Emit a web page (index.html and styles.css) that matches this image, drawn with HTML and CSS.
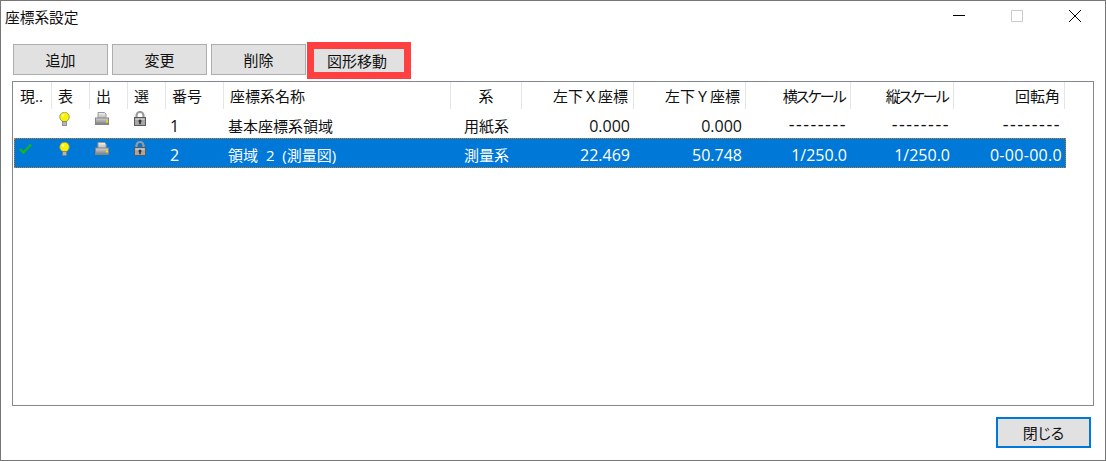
FILE: index.html
```html
<!DOCTYPE html>
<html lang="ja">
<head>
<meta charset="utf-8">
<title>座標系設定</title>
<link rel="stylesheet" href="styles.css">
</head>
<body>
<svg class="defs" width="0" height="0" aria-hidden="true">
  <defs>
    <linearGradient id="gBody" x1="0" y1="0" x2="0" y2="1">
      <stop offset="0" stop-color="#d4d4d4"/>
      <stop offset="1" stop-color="#7c7c7c"/>
    </linearGradient>
    <linearGradient id="gTop" x1="0" y1="0" x2="0" y2="1">
      <stop offset="0" stop-color="#f0f0f0"/>
      <stop offset="1" stop-color="#b4b4b4"/>
    </linearGradient>
    <symbol id="bulb" viewBox="0 0 11 14">
      <circle cx="5.500" cy="5" r="4.800" fill="#f6f200" stroke="#8f8f5a" stroke-width=".8"/>
      <circle cx="4" cy="3.500" r="1.300" fill="#fdfd9a"/>
      <rect x="3.500" y="9.500" width="4" height="4.200" fill="#b5b5b5" stroke="#777" stroke-width=".7"/>
    </symbol>
    <symbol id="printer" viewBox="0 0 14 13">
      <path d="M3 .5h6.500l1.500 1.500v4.500h-8z" fill="url(#gTop)" stroke="#9a9a9a"/>
      <rect x=".5" y="6" width="13" height="6.500" fill="url(#gBody)" stroke="#858585"/>
      <rect x="11" y="8.500" width="2" height="2" fill="#f0e400"/>
    </symbol>
    <symbol id="lock" viewBox="0 0 12 15">
      <path d="M2.500 8V4.500a3.500 3.500 0 0 1 7 0V8" fill="none" stroke="#9a9a9a" stroke-width="2.200"/>
      <rect x=".5" y="6.500" width="11" height="8" fill="#a6a6a6" stroke="#5a5a5a"/>
      <rect x="1.500" y="7.500" width="9" height="1.500" fill="#c8c8c8"/>
      <circle cx="6" cy="10" r="1.500" fill="#333"/>
      <rect x="5.200" y="10" width="1.600" height="3.200" fill="#333"/>
    </symbol>
  </defs>
</svg>
<main class="window">
  <header class="titlebar">
    <h1 class="title">座標系設定</h1>
    <div class="winctrls">
      <svg class="winicon" width="12" height="12" viewBox="0 0 12 12"><path d="M0 5.500H12" stroke="#000"/></svg>
      <svg class="winicon" width="12" height="12" viewBox="0 0 12 12"><rect x=".5" y=".5" width="11" height="11" fill="none" stroke="#ccc"/></svg>
      <svg class="winicon" width="12" height="12" viewBox="0 0 12 12"><path d="M0 0L12 12M12 0L0 12" stroke="#000"/></svg>
    </div>
  </header>
  <div class="toolbar">
    <button class="btn">追加</button>
    <button class="btn">変更</button>
    <button class="btn">削除</button>
    <button class="btn btn-marked">図形移動</button>
  </div>
  <section class="list">
    <div class="row head">
      <div class="c c1 sep">現..</div>
      <div class="c c2 sep">表</div>
      <div class="c c3 sep">出</div>
      <div class="c c4 sep">選</div>
      <div class="c c5 sep">番号</div>
      <div class="c c6 sep">座標系名称</div>
      <div class="c c7 sep center">系</div>
      <div class="c c8 sep right">左下Ｘ座標</div>
      <div class="c c9 sep right">左下Ｙ座標</div>
      <div class="c c10 sep right kana">横スケール</div>
      <div class="c c11 sep right kana">縦スケール</div>
      <div class="c c12 sep right">回転角</div>
    </div>
    <div class="row item">
      <div class="c c1"></div>
      <div class="c c2 ic"><svg class="i-bulb"><use href="#bulb"/></svg></div>
      <div class="c c3 ic"><svg class="i-printer"><use href="#printer"/></svg></div>
      <div class="c c4 ic"><svg class="i-lock"><use href="#lock"/></svg></div>
      <div class="c c5 num">1</div>
      <div class="c c6">基本座標系領域</div>
      <div class="c c7 center">用紙系</div>
      <div class="c c8 right num">0.000</div>
      <div class="c c9 right num">0.000</div>
      <div class="c c10 right dash">--------</div>
      <div class="c c11 right dash">--------</div>
      <div class="c c12 right dash">--------</div>
    </div>
    <div class="row item selected">
      <div class="c c1 ic"><svg class="i-check" viewBox="0 0 13 11"><path d="M1 6L4.500 9.500L12 1.500" fill="none" stroke="#17b51c" stroke-width="2.400"/></svg></div>
      <div class="c c2 ic"><svg class="i-bulb"><use href="#bulb"/></svg></div>
      <div class="c c3 ic"><svg class="i-printer"><use href="#printer"/></svg></div>
      <div class="c c4 ic"><svg class="i-lock"><use href="#lock"/></svg></div>
      <div class="c c5 num">2</div>
      <div class="c c6">領域 2 (測量図)</div>
      <div class="c c7 center">測量系</div>
      <div class="c c8 right num">22.469</div>
      <div class="c c9 right num">50.748</div>
      <div class="c c10 right num">1/250.0</div>
      <div class="c c11 right num">1/250.0</div>
      <div class="c c12 right num angle">0-00-00.0</div>
    </div>
  </section>
  <footer class="footer">
    <button class="btn btn-default">閉じる</button>
  </footer>
</main>
</body>
</html>
```
FILE: styles.css
```css
* { box-sizing: border-box; }
html, body { margin: 0; padding: 0; }
body {
  width: 1106px;
  height: 461px;
  overflow: hidden;
  background: #fff;
  color: #111;
  font-family: "Open Sans", "Noto Sans CJK JP", sans-serif;
  font-size: 15px;
}
.defs { display: block; height: 0; }
.window {
  width: 1106px;
  height: 461px;
  border: 1px solid #767676;
  display: flex;
  flex-direction: column;
  padding: 0 0 0 11px;
}
.titlebar {
  height: 43px;
  margin-left: -7px;
  display: flex;
  justify-content: space-between;
  padding-top: 5px;
}
.title { margin: 0; font-size: 14.7px; font-weight: 400; line-height: 22px; }
.winctrls { display: flex; gap: 46px; padding: 4px 24px 0 0; }
.winicon { display: block; }
.toolbar { display: flex; gap: 4px; height: 37px; padding-left: 1px; align-items: flex-start; }
.btn {
  width: 95px;
  height: 31px;
  background: #e1e1e1;
  border: 1px solid #adadad;
  font: inherit;
  color: #111;
  padding: 0;
}
.btn-marked {
  width: 90px;
  height: 23px;
  margin: 5px 0 0 4px;
  padding-right: 4px;
  border: 0;
  outline: 7px solid #ff4040;
}
.list {
  width: 1082px;
  height: 325px;
  border: 1px solid #828790;
  padding: 0 0 0 1px;
}
.row { display: flex; }
.head { height: 28px; }
.item { height: 28px; width: 1052px; }
.selected {
  height: 30px;
  background: #0078d7;
  color: #fff;
  outline: 1px dotted #d07a10;
  outline-offset: -1px;
}
.c { padding: 0 5px 0 6px; line-height: 22px; white-space: nowrap; flex: none; }
.head .c { padding-top: 3px; }
.sep { border-right: 1px solid #e5e5e5; height: 27px; }
.kana { font-feature-settings: "palt"; letter-spacing: -1.8px; }
.head .c12 { padding-right: 4px; }
.item .c { padding: 5px 4px 0 5px; }
.selected .c { padding-top: 6px; }
.item .c6 { padding-left: 4px; word-spacing: 4px; }
.item .ic { padding: 0 0 0 5px; display: flex; align-items: flex-start; }
.selected .ic { padding-top: 2px; }
.item .c2 { padding-left: 7px; }
.item .c4 { padding-left: 6px; }
.item .c1 { padding-left: 5px; }
.item .c5 { padding-left: 4px; }
.head .c7, .item .c7 { padding-left: 4px; padding-right: 4px; }
.num { font-size: 16px; }
.selected .angle { letter-spacing: .3px; padding-right: 3px; }
.item .dash { font-size: 18px; letter-spacing: 1.5px; padding: 3px 4px 0 0; }
.center { text-align: center; }
.right { text-align: right; }
.c1 { width: 38px; }
.c2, .c3, .c4 { width: 38px; }
.c5 { width: 58px; }
.c6 { width: 227px; }
.c7 { width: 71px; }
.c8, .c9 { width: 112px; }
.c10 { width: 105px; }
.c11 { width: 103px; }
.c12 { width: 111px; }
.i-bulb { width: 11px; height: 14px; margin-top: 2px; }
.i-printer { width: 14px; height: 13px; margin-top: 2px; }
.i-lock { width: 12px; height: 15px; margin-top: 1px; }
.i-check { width: 13px; height: 11px; margin-top: 3px; }
.footer { display: flex; justify-content: flex-end; padding: 11px 14px 0 0; }
.btn-default { width: 95px; height: 31px; border: 2px solid #0078d7; font-feature-settings: "palt"; }
```
